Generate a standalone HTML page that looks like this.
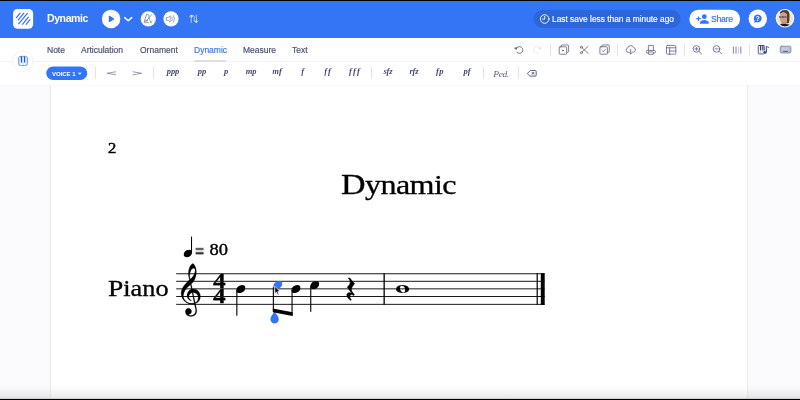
<!DOCTYPE html>
<html><head><meta charset="utf-8"><title>Dynamic</title>
<style>
*{box-sizing:border-box;margin:0;padding:0}
html,body{width:800px;height:400px;overflow:hidden;background:#fbfafc;font-family:"Liberation Sans",sans-serif}
.abs{position:absolute}
#topline{left:0;top:0;width:800px;height:1px;background:#000}
#hdr{left:0;top:1px;width:800px;height:37px;background:#3475f5}
#botline{left:0;top:398px;width:800px;height:2px;background:linear-gradient(to bottom,rgba(0,0,0,.18) 0,rgba(0,0,0,.18) 1px,#000 1px,#000 2px)}
#tb{left:0;top:38px;width:800px;height:47px;background:#fff;box-shadow:0 .5px 1.5px rgba(40,40,80,.06)}
#tbline{left:0;top:60.9px;width:800px;height:1px;background:#f3f3f7}
#page{left:50.8px;top:78px;width:696.4px;height:340px;background:#fff;box-shadow:0 0 0 .8px rgba(60,60,90,.07),0 0 2.5px rgba(60,60,90,.05)}
#botshade{left:0;top:384px;width:800px;height:14px;background:linear-gradient(to bottom,rgba(0,0,0,0) 0,rgba(0,0,0,.018) 36%,rgba(0,0,0,.055) 72%,rgba(0,0,0,.09) 100%)}
.t{position:absolute;white-space:nowrap;line-height:1;will-change:transform}
.tab{font-size:8.5px;color:#4b516f;top:46.1px;-webkit-text-stroke-width:.18px}
.dyn{font-family:"Liberation Serif",serif;font-style:italic;font-weight:bold;font-size:7.8px;color:#434b6c;top:68.1px;transform:translateX(-50%) scaleX(1.1);letter-spacing:-.1px}
.sep{position:absolute;width:1px;background:#e2e3ea}
.serif{font-family:"Liberation Serif",serif;color:#000;transform-origin:0 0;-webkit-text-stroke:.3px #000}
.fl1::first-letter{font-size:29.2px}.fl2::first-letter{font-size:23.6px}
svg{position:absolute;left:0;top:0;overflow:visible}
</style></head><body>
<div class="abs" id="hdr"></div>
<div class="abs" id="topline"></div>
<div class="abs" id="page"></div>
<div class="abs" id="botshade"></div>
<div class="abs" id="tb"></div>
<div class="abs" id="tbline"></div>
<div class="abs" id="botline"></div>

<svg width="800" height="400" viewBox="0 0 800 400">
 <rect x="533.4" y="10" width="147.2" height="18" rx="9" fill="rgba(10,30,90,.17)"/>
 <rect x="689.3" y="9.8" width="50.8" height="18.3" rx="9.15" fill="#fff"/>
 <rect x="46.3" y="66.5" width="40.9" height="13.6" rx="6.8" fill="#3475f5"/>
</svg>
<!-- header texts -->
<div class="t" style="left:46.5px;top:13.3px;font-size:10.5px;font-weight:bold;color:#fff;letter-spacing:-.4px">Dynamic</div>
<div class="t" style="left:552.2px;top:14.9px;font-size:8.35px;color:#fff;-webkit-text-stroke:.15px #fff">Last save less than a minute ago</div>
<div class="t" style="left:710.6px;top:15.2px;font-size:8.7px;color:#3475f5;letter-spacing:-.3px;-webkit-text-stroke:.2px #3475f5">Share</div>

<!-- tabs -->
<div class="t tab" style="left:47px">Note</div>
<div class="t tab" style="left:81.4px">Articulation</div>
<div class="t tab" style="left:140px">Ornament</div>
<div class="t tab" style="left:194px;color:#3b78ea">Dynamic</div>
<div class="t tab" style="left:242.6px">Measure</div>
<div class="t tab" style="left:292.4px">Text</div>
<div class="abs" style="left:194px;top:60.3px;width:32px;height:1.5px;background:#dddfe7"></div>

<!-- voice pill -->
<div class="t" style="left:52.1px;top:70.7px;font-size:6.05px;font-weight:bold;color:#fff;letter-spacing:-.05px">VOICE 1</div>

<!-- dynamics -->
<div class="t dyn" style="left:172.6px">ppp</div>
<div class="t dyn" style="left:201.9px">pp</div>
<div class="t dyn" style="left:226.4px">p</div>
<div class="t dyn" style="left:251px">mp</div>
<div class="t dyn" style="left:277px">mf</div>
<div class="t dyn" style="left:302.8px;letter-spacing:.6px">f</div>
<div class="t dyn" style="left:327.6px;letter-spacing:.8px">ff</div>
<div class="t dyn" style="left:355px;letter-spacing:1.1px">fff</div>
<div class="t dyn" style="left:387.7px">sfz</div>
<div class="t dyn" style="left:413.5px">rfz</div>
<div class="t dyn" style="left:439.9px;letter-spacing:.5px">fp</div>
<div class="t dyn" style="left:466.7px">pf</div>
<div class="t dyn" style="left:501.2px;font-size:8.6px;top:69.6px;font-weight:normal;letter-spacing:-.35px;color:#5a6182">Ped.</div>

<!-- separators -->
<div class="sep" style="left:95.1px;top:67px;height:12px"></div>
<div class="sep" style="left:153.1px;top:67px;height:12px"></div>
<div class="sep" style="left:370.9px;top:67px;height:12px"></div>
<div class="sep" style="left:482.9px;top:67px;height:12px"></div>
<div class="sep" style="left:518.1px;top:67px;height:12px"></div>
<div class="sep" style="left:550px;top:44px;height:11.5px"></div>
<div class="sep" style="left:616.8px;top:44px;height:11.5px"></div>
<div class="sep" style="left:683.8px;top:44px;height:11.5px"></div>
<div class="sep" style="left:749px;top:44px;height:11.5px"></div>

<!-- score texts -->
<div class="t serif" style="left:108px;top:140.6px;font-size:14.8px;transform:scaleX(1.12);-webkit-text-stroke:.5px #000">2</div>
<div class="t serif fl1" style="left:341.3px;top:170.2px;font-size:27.6px;letter-spacing:-.5px;transform:scaleX(1.163)">Dynamic</div>
<div class="t serif fl2" style="left:107.6px;top:276.9px;font-size:22.6px;transform:scaleX(1.165)">Piano</div>
<div class="t" style="left:195.2px;top:236px;width:40px;height:24px"><span class="t serif" style="left:.4px;top:4.5px;font-size:17.6px;transform:scale(.93,1.25);-webkit-text-stroke:.45px #000">=</span><span class="t serif" style="left:10.4px;top:4.6px;font-size:17.6px;transform:scaleX(1.05);white-space:pre;-webkit-text-stroke:.4px #000"> 80</span></div>
<div class="t serif" style="left:212.6px;top:270.6px;font-size:21.6px;font-weight:bold;transform:scaleX(1.17)">4</div>
<div class="t serif" style="left:212.6px;top:285.8px;font-size:21.6px;font-weight:bold;transform:scaleX(1.17)">4</div>

<svg width="800" height="400" viewBox="0 0 800 400">
<!-- SCORE -->
<g id="score" fill="#000">
 <g stroke="#1a1a1a" stroke-width="1" fill="none">
  <path d="M176.2 273.75H544.6M176.2 281.3H544.6M176.2 288.85H544.6M176.2 296.5H544.6M176.2 304.35H544.6"/>
 </g>
 <rect x="383.5" y="273.25" width="1.3" height="31.6"/>
 <rect x="536.6" y="273.25" width="1.2" height="31.6"/>
 <rect x="540.8" y="273.25" width="3.9" height="31.6"/>
 <!-- clef -->
 <path stroke="#000" stroke-width="8" transform="translate(179.55 304.3) scale(.0315 -.0305)" d="M314 801Q300 854 291.0 906.0Q282 958 282 1012Q282 1059 288.5 1100.5Q295 1142 307 1177Q320 1217 341.0 1252.5Q362 1288 385.5 1311.0Q409 1334 427 1334Q451 1334 493 1249Q514 1206 524.0 1156.0Q534 1106 534 1049Q534 978 515.0 907.5Q496 837 459.5 775.0Q423 713 372 666L407 498Q422 500 432.0 501.0Q442 502 447 502Q508 502 556.0 467.5Q604 433 632.5 377.0Q661 321 661 254Q661 177 621.5 115.5Q582 54 503 25Q508 8 532 -117Q538 -147 541.0 -164.5Q544 -182 545.0 -195.0Q546 -208 546 -225Q546 -275 521.5 -314.5Q497 -354 455.5 -376.0Q414 -398 363 -398Q311 -398 271.0 -378.5Q231 -359 208.0 -324.5Q185 -290 185 -245Q185 -197 211.5 -165.0Q238 -133 287 -133Q329 -133 355.5 -163.5Q382 -194 382 -236Q382 -272 357.0 -299.0Q332 -326 292 -326H282Q308 -365 364 -365Q433 -365 472.0 -320.0Q511 -275 511 -205Q511 -188 507.0 -159.5Q503 -131 493 -91Q483 -51 477.5 -25.0Q472 1 470 12Q436 2 390 2Q304 2 222 52Q142 102 96.0 184.0Q50 266 50 361Q50 451 91 530Q132 609 192.5 675.0Q253 741 314 801ZM341 826Q364 838 390.0 870.5Q416 903 440.0 945.0Q464 987 479.0 1029.5Q494 1072 494 1106Q494 1142 483.0 1163.0Q472 1184 445 1184Q421 1184 398.5 1162.0Q376 1140 358.5 1103.5Q341 1067 331.0 1022.0Q321 977 321 930Q321 898 327.5 872.0Q334 846 341 826ZM398 379Q371 373 347.0 353.5Q323 334 308.5 306.5Q294 279 294 248Q294 223 307.0 196.5Q320 170 339 154Q352 142 365 136Q380 129 380 123Q380 120 370 117Q332 126 301.5 151.0Q271 176 253.5 211.5Q236 247 236 287Q236 330 253.5 370.0Q271 410 302.5 442.0Q334 474 374 490L345 641Q229 547 174.5 456.5Q120 366 120 277Q120 212 154.0 156.0Q188 100 247.0 65.5Q306 31 380 31Q400 31 420.5 35.0Q441 39 464 45ZM495 55Q593 97 593 227Q593 270 571.0 305.5Q549 341 512.0 362.0Q475 383 429 383Z"/>
 <!-- tempo note -->
 <path transform="translate(182.35 257.2) scale(.028 -.028)" d="M159 -1Q111 -1 80.5 21.5Q50 44 50 90Q50 141 78.5 181.5Q107 222 153.0 245.5Q199 269 251 269Q295 269 321.0 245.5Q347 222 347 179Q347 130 321.0 89.0Q295 48 252.5 23.5Q210 -1 159 -1Z"/>
 <rect x="191" y="236.6" width="1.05" height="16"/>
 <!-- note 1 B4 -->
 <path transform="translate(234.85 293.05) scale(.03 -.03)" d="M159 -1Q111 -1 80.5 21.5Q50 44 50 90Q50 141 78.5 181.5Q107 222 153.0 245.5Q199 269 251 269Q295 269 321.0 245.5Q347 222 347 179Q347 130 321.0 89.0Q295 48 252.5 23.5Q210 -1 159 -1Z"/>
 <rect x="236.3" y="290" width="1.1" height="25.7"/>
 <!-- note 2 C5 blue -->
 <g fill="#3475f5">
 <path transform="translate(271.85 289.0) scale(.03 -.03)" d="M159 -1Q111 -1 80.5 21.5Q50 44 50 90Q50 141 78.5 181.5Q107 222 153.0 245.5Q199 269 251 269Q295 269 321.0 245.5Q347 222 347 179Q347 130 321.0 89.0Q295 48 252.5 23.5Q210 -1 159 -1Z"/>
 <path d="M274.6 311.6C276.2 314.4 278.8 316.4 278.8 319.2A4.2 4.2 0 0 1 270.4 319.2C270.4 316.4 273 314.4 274.6 311.6Z"/>
 </g>
 <rect x="272.8" y="287.2" width="1.1" height="23.3"/>
 <!-- note 3 B4 -->
 <path transform="translate(289.95 293.05) scale(.03 -.03)" d="M159 -1Q111 -1 80.5 21.5Q50 44 50 90Q50 141 78.5 181.5Q107 222 153.0 245.5Q199 269 251 269Q295 269 321.0 245.5Q347 222 347 179Q347 130 321.0 89.0Q295 48 252.5 23.5Q210 -1 159 -1Z"/>
 <rect x="291.5" y="290" width="1.1" height="25.6"/>
 <!-- beam -->
 <path d="M272.8 308.5L292.6 312.2V315.9L272.8 312.2Z"/>
 <!-- note 4 C5 -->
 <path transform="translate(308.75 289.1) scale(.03 -.03)" d="M159 -1Q111 -1 80.5 21.5Q50 44 50 90Q50 141 78.5 181.5Q107 222 153.0 245.5Q199 269 251 269Q295 269 321.0 245.5Q347 222 347 179Q347 130 321.0 89.0Q295 48 252.5 23.5Q210 -1 159 -1Z"/>
 <rect x="310.2" y="286" width="1.1" height="25.8"/>
 <!-- quarter rest -->
 <path stroke="#000" stroke-width="22" stroke-linejoin="round" transform="translate(345.35 304.1) scale(.0297 -.0297)" d="M147 878 307 683Q257 624 230.0 581.0Q203 538 203 494Q203 457 227.0 416.5Q251 376 303 314L287 292Q243 320 205 320Q177 320 163.0 301.5Q149 283 149 257Q149 225 162.5 196.5Q176 168 199 142L186 123Q117 173 84.0 214.0Q51 255 51 303Q51 346 78.0 366.0Q105 386 143 386Q173 386 221 363V365L67 570Q168 659 168 736Q168 797 104 878Z"/>
 <!-- whole note -->
 <path transform="translate(394.5 293.3) scale(.0315 -.0315)" d="M50 135Q50 172 77.0 200.0Q104 228 150.5 244.0Q197 260 253 260Q310 260 358.0 244.5Q406 229 435.0 201.0Q464 173 464 135Q464 96 436.0 67.5Q408 39 361.5 23.5Q315 8 259 8Q203 8 155.5 23.0Q108 38 79.0 66.5Q50 95 50 135ZM280 28Q314 28 326.5 53.0Q339 78 339 112Q339 147 324.5 176.0Q310 205 286.0 222.5Q262 240 232 240Q198 240 186.5 215.0Q175 190 175 156Q175 122 189.0 93.0Q203 64 226.5 46.0Q250 28 280 28Z"/>
 <!-- mouse cursor -->
 <path transform="translate(274.8 286.3)" d="M0 0V7.4L1.7 5.8L3 8.7L4.2 8.2L2.9 5.3H5.2Z" fill="#000" stroke="#fff" stroke-width=".7" stroke-linejoin="round"/>
</g>
<!-- ICONS -->
<g id="icons" fill="none" stroke-linecap="round" stroke-linejoin="round">
 <!-- logo -->
 <rect x="13.1" y="8.9" width="20" height="19.9" rx="4.6" fill="#fff"/>
 <g stroke="#3475f5" stroke-width="1.25" stroke-linecap="butt">
  <path d="M16.0 18.1L20.3 12.9M17.9 20.3L24.1 12.9M18.4 24.2L27.6 13.1M22.2 24.6L28.6 16.9M25.9 24.6L30.2 19.4"/>
 </g>
 <!-- play -->
 <circle cx="111.1" cy="18.9" r="9.25" fill="#fff"/>
 <path d="M109.4 16.3V21.5L113.6 18.9Z" fill="#3475f5" stroke="#3475f5" stroke-width="1.2"/>
 <path d="M124.7 17.6L128.2 20.7L131.7 17.6" stroke="#fff" stroke-width="1.45"/>
 <!-- metronome -->
 <circle cx="148.3" cy="18.9" r="7.6" fill="#fbfcff"/>
 <g stroke="#6e7595" stroke-width=".7">
  <path d="M146.5 14.6Q147.6 14 148.6 14.5L149.4 19.2M148.3 22.7H144.6Q144 22.7 144.2 22L146.5 14.6"/>
  <path d="M146.7 20.6L151.4 14.9"/>
  <path d="M144.7 20.9H147.4" stroke-width="1"/>
  <path d="M149.8 20.9L151.6 22.9M151.6 20.9L149.8 22.9"/>
 </g>
 <!-- volume -->
 <circle cx="171" cy="18.9" r="7.6" fill="#fbfcff"/>
 <g stroke="#7d84a3" stroke-width=".7">
  <path d="M166.7 17.5H168.2L170.2 15.8V22L168.2 20.3H166.7Z"/>
  <path d="M171.9 17Q173 18.9 171.9 20.8M173.5 15.6Q175.6 18.9 173.5 22.2"/>
 </g>
 <!-- transpose arrows -->
 <g stroke="rgba(255,255,255,.62)" stroke-width="1">
  <path d="M191.2 22.6V15.2M189.6 16.8L191.2 15.1L192.8 16.8"/>
  <path d="M191.2 17.5C191.2 14.6 194.3 14.6 194.3 17.5V19.6C194.3 22.6 196.4 22.6 196.4 20.2"/>
  <path d="M196.4 15.2V22.6M194.8 21L196.4 22.7L198 21"/>
 </g>
 <!-- clock -->
 <circle cx="544.7" cy="19" r="4.3" stroke="#fff" stroke-width=".9"/>
 <path d="M544.7 16.4V19.1H542.6" stroke="#fff" stroke-width=".9"/>
 <!-- share icon -->
 <g fill="#3475f5" stroke="none">
  <circle cx="704.3" cy="16.7" r="2.4"/>
  <path d="M699.9 23.7V22.6C699.9 20.8 702.6 19.9 704.3 19.9S708.7 20.8 708.7 22.6V23.7Z"/>
  <path d="M696.2 18.1H697.9V16.4H699.1V18.1H700.8V19.3H699.1V21H697.9V19.3H696.2Z"/>
 </g>
 <!-- help -->
 <circle cx="757.8" cy="18.85" r="9.25" fill="#fff"/>
 <path d="M757.75 14.4A4 4 0 1 1 755.9 21.95L754.4 23.2L754.5 20.75A4 4 0 0 1 757.75 14.4Z" fill="#3475f5"/>
 <text x="757.75" y="20.65" font-family="Liberation Sans, sans-serif" font-size="6.5" font-weight="bold" fill="#fff" stroke="none" text-anchor="middle">?</text>
 <!-- avatar -->
 <g transform="translate(0 -.4)">
 <clipPath id="av"><circle cx="784.95" cy="18.6" r="8.2"/></clipPath>
 <circle cx="784.95" cy="18.6" r="9.25" fill="#fff"/>
 <g clip-path="url(#av)" stroke="none">
  <rect x="775" y="9" width="20" height="20" fill="#e9e3e1"/>
  <path d="M779.9 14.2C779.6 10.9 782.6 9.9 784.6 10C787.4 10.100 789.2 11.600 789.4 14.500C789.6 17.500 789.5 20.500 789 23.200L786.500 23.900L786.900 15.200C785.500 13.100 782.500 12.600 779.900 14.200Z" fill="#553a2e"/>
  <ellipse cx="783.4" cy="18" rx="3.7" ry="5.5" fill="#cf9f89"/>
  <path d="M781.4 22.400H786.200V25H781.400Z" fill="#bd8e7a"/>
  <path d="M779.2 16.500H786.400V18.500H779.200Z" fill="#574543" opacity=".78"/>
  <path d="M780.5 17H782.300V18H780.500ZM783.600 17H785.400V18H783.600Z" fill="#c9a391" opacity=".85"/>
  <path d="M778 28.500V26.300C779.500 24.600 782 24.200 784.600 24.500C787.400 24.200 790 24.900 791.400 26.500V28.500Z" fill="#1c1a1c"/>
 </g>
 </g>
 <!-- left round piano button -->
 <circle cx="22.9" cy="61.2" r="10.3" fill="#fff" stroke="#efeff4" stroke-width=".8"/>
 <rect x="18.6" y="56.4" width="8.9" height="9.1" rx="1.9" fill="#dbe7fe" stroke="#4a84ee" stroke-width=".75"/>
 <path d="M21.5 62V65.2M24.6 62V65.2" stroke="#fff" stroke-width=".9" stroke-linecap="butt"/>
 <path d="M21.5 56.4V62.4M24.6 56.4V62.4" stroke="#2457c5" stroke-width="1.15" stroke-linecap="butt"/>
 <!-- voice caret -->
 <path d="M78.3 73L79.8 74.6L81.3 73Z" fill="#fff" stroke="#fff" stroke-width=".3"/>
 <!-- hairpins -->
 <g stroke="#6b7190" stroke-width=".7">
  <path d="M115.6 71.8L107.1 73.3L115.6 74.8"/>
  <path d="M133 71.8L141.6 73.3L133 74.8"/>
 </g>
 <!-- backspace -->
 <path d="M527.6 73.3L530.3 70.5H535.3Q536.2 70.5 536.2 71.4V75.2Q536.2 76.1 535.3 76.1H530.3Z" stroke="#4a5172" stroke-width=".9"/>
 <path d="M532 72.3L534 74.3M534 72.3L532 74.3" stroke="#4a5172" stroke-width=".95"/>
 <!-- undo / redo -->
 <g stroke="#5a6080" stroke-width=".85">
  <path d="M516.3 48.6A3.4 3.4 0 1 1 517 52.4"/>
  <path d="M514.6 48.3L516.4 49.6L516.9 47.5Z" fill="#5a6080" stroke-width=".5"/>
 </g>
 <g stroke="#e3e5ec" stroke-width=".85">
  <path d="M540 48.6A3.4 3.4 0 1 0 539.3 52.4"/>
  <path d="M541.7 48.3L539.9 49.6L539.4 47.5Z" fill="#e3e5ec" stroke-width=".5"/>
 </g>
 <!-- copy -->
 <g stroke="#5a6080" stroke-width=".8">
  <path d="M561.2 46.6V45.9Q561.2 45 562.1 45H567.7Q568.6 45 568.6 45.9V51.4Q568.6 52.3 567.7 52.3H566.9"/>
  <rect x="559.2" y="46.8" width="7.5" height="7.4" rx=".9"/>
  <circle cx="562.95" cy="50.5" r=".55" fill="#5a6080" stroke-width=".5"/>
 </g>
 <!-- scissors -->
 <g stroke="#5a6080" stroke-width=".8">
  <circle cx="581.4" cy="47.2" r="1.05"/><circle cx="581.4" cy="52.7" r="1.05"/>
  <path d="M582.2 47.9L588 53.3M582.2 52L588 46.4"/>
 </g>
 <!-- paste check -->
 <g stroke="#5a6080" stroke-width=".8">
  <path d="M601.9 46.6V45.9Q601.9 45 602.8 45H608.4Q609.3 45 609.3 45.9V51.4Q609.3 52.3 608.4 52.3H607.6"/>
  <rect x="599.9" y="46.8" width="7.5" height="7.4" rx=".9"/>
  <path d="M602.2 50.7L603.2 51.7L605.2 49.5"/>
 </g>
 <!-- cloud download -->
 <g stroke="#5a6080" stroke-width=".8">
  <path d="M628.6 52.3H628.2A2.2 2.2 0 0 1 627.7 48A3.1 3.1 0 0 1 633.6 47.6A2.4 2.4 0 0 1 633.4 52.3H632.9"/>
  <path d="M630.7 49.3V53.8M629.3 52.5L630.7 53.9L632.1 52.5"/>
 </g>
 <!-- printer -->
 <g stroke="#5a6080" stroke-width=".8">
  <path d="M648.4 50.4V45.4H653.4V50.4"/>
  <path d="M648.2 53H647.4Q646.4 53 646.4 52V51.4Q646.4 50.4 647.4 50.4H654.4Q655.4 50.4 655.4 51.4V52Q655.4 53 654.4 53H653.6"/>
  <rect x="648.4" y="51.9" width="5" height="2.4" rx=".4"/>
 </g>
 <!-- layout -->
 <g stroke="#5a6080" stroke-width=".8">
  <rect x="666.5" y="45.4" width="9.3" height="8.8" rx="1.1"/>
  <path d="M666.5 47.8H675.8M669.6 47.8V54.2M669.6 51H675.8"/>
 </g>
 <!-- zoom in/out -->
 <g stroke="#5a6080" stroke-width=".8">
  <circle cx="696.4" cy="48.9" r="3.3"/><path d="M698.9 51.3L701.6 53.9M694.9 48.9H697.9M696.4 47.4V50.4"/>
  <circle cx="716.5" cy="48.9" r="3.3"/><path d="M719 51.3L721.7 53.9M715 48.9H718"/>
 </g>
 <!-- bars -->
 <g stroke-width="1" stroke-linecap="butt">
  <path d="M733.4 46.6V53.7M736 46.6V53.7M740.8 46.6V53.7" stroke="#7d84a3"/>
  <path d="M738.4 46.6V53.7" stroke="#c6c9d9"/>
 </g>
 <!-- piano + note -->
 <g>
  <rect x="758.3" y="45.5" width="6.4" height="8.4" rx=".9" fill="#fff" stroke="#2f3d6e" stroke-width=".8"/>
  <path d="M760.6 45.5V50.6M762.9 45.5V50.6" stroke="#2f3d6e" stroke-width="1.3" stroke-linecap="butt"/>
  <path d="M760.6 50.6V53.9M762.9 50.6V53.9" stroke="#9aa3c4" stroke-width=".5"/>
  <ellipse cx="764.9" cy="52.4" rx="1.9" ry="1.6" fill="#2f3d6e" stroke="#fff" stroke-width=".5"/>
  <path d="M766.5 52.3V46.3L768.7 47.7" stroke="#2f3d6e" stroke-width=".8"/>
 </g>
 <!-- keyboard -->
 <rect x="780.2" y="46.2" width="10.7" height="6.8" rx="1.3" fill="#b9bdd2" stroke="#7a81a2" stroke-width=".8"/>
 <path d="M781.8 48.1H789.3M781.8 49.6H789.3" stroke="#e4e6f0" stroke-width=".8" stroke-dasharray=".9 .6" stroke-linecap="butt"/>
 <path d="M783.2 51.4H787.9" stroke="#4d5577" stroke-width=".9" stroke-linecap="butt"/>
</g>
</svg>
</body></html>
